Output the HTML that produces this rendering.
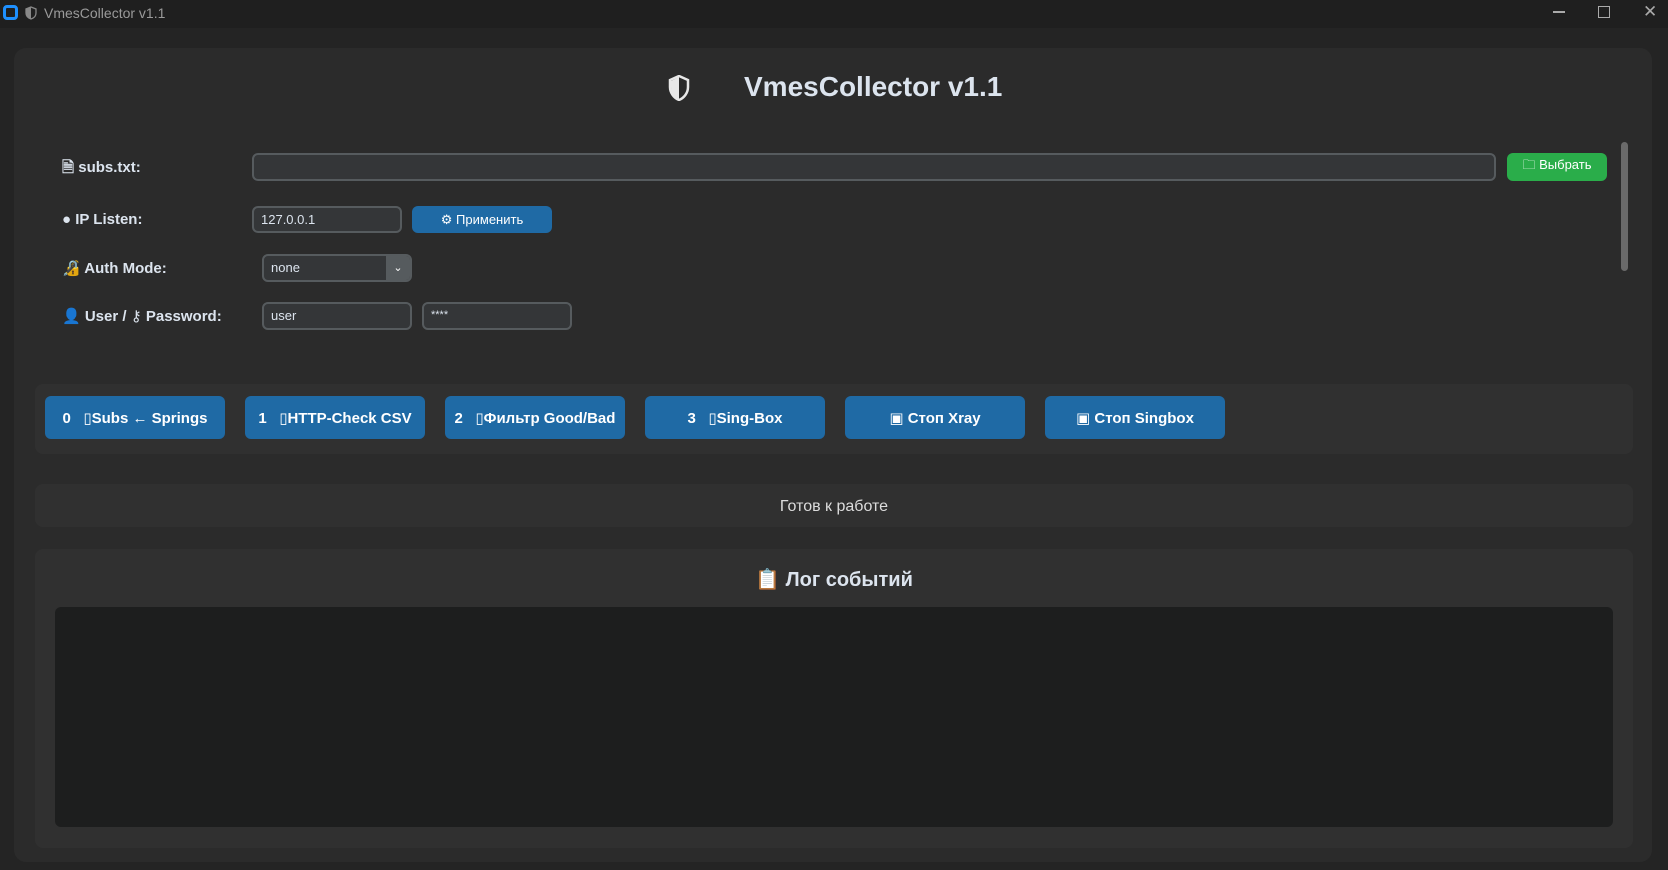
<!DOCTYPE html>
<html><head><meta charset="utf-8"><style>
*{box-sizing:border-box;margin:0;padding:0}
body{width:1668px;height:870px;background:#242424;font-family:"Liberation Sans","DejaVu Sans",sans-serif;color:#dce4ee;position:relative;overflow:hidden}
.a{position:absolute}
.tb{left:0;top:0;width:1668px;height:28px;background:#1f1f1f}
.frame{left:14px;top:48px;width:1638px;height:814px;background:#2b2b2b;border-radius:12px}
.lbl{font-weight:bold;font-size:15px;color:#dce4ee}
.inp{background:#343638;border:2px solid #565b5e;border-radius:6px;font-size:13px;color:#dce4ee;padding-left:7px;line-height:23px}
.btn{background:#1f6aa5;border-radius:6px;color:#fff;font-weight:bold;font-size:15px;display:flex;align-items:center;justify-content:center}
.panel{background:#303030;border-radius:8px;left:35px;width:1598px}
</style></head><body>
<div class="a tb"></div>
<div class="a" style="left:3px;top:5px;width:15px;height:15px;border:3px solid #1e90ff;border-radius:4px"></div>
<svg class="a" style="left:25px;top:6px" width="12" height="14" viewBox="0 0 12 14"><path d="M6 1 L11 3 V7 C11 10 9 12 6 13 C3 12 1 10 1 7 V3 Z" fill="none" stroke="#888" stroke-width="1.3"/><path d="M6 1 V13 C3 12 1 10 1 7 V3 Z" fill="#888"/></svg>
<div class="a" style="left:44px;top:5px;font-size:14px;color:#9a9a9a">VmesCollector v1.1</div>
<div class="a" style="left:1553px;top:11px;width:12px;height:1.5px;background:#aaa"></div>
<div class="a" style="left:1598px;top:6px;width:12px;height:12px;border:1.5px solid #aaa"></div>
<div class="a" style="left:1643px;top:2px;font-size:17px;color:#aaa">✕</div>
<div class="a frame"></div>
<svg class="a" style="left:668px;top:75px" width="22" height="26" viewBox="0 0 22 26"><path d="M11 1 L20 5 V12 C20 18 16 23 11 25 C6 23 2 18 2 12 V5 Z" fill="none" stroke="#e8e8e8" stroke-width="2.5"/><path d="M11 2 L11 24 C6 22 3 18 3 12 V6 Z" fill="#e8e8e8"/></svg>
<div class="a" style="left:744px;top:71px;font-size:28px;font-weight:bold;color:#dce4ee">VmesCollector v1.1</div>

<div class="a lbl" style="left:62px;top:157px">🗎 subs.txt:</div>
<div class="a inp" style="left:252px;top:153px;width:1244px;height:28px"></div>
<div class="a btn" style="left:1507px;top:153px;width:100px;height:28px;background:#2aad4a;font-weight:normal;font-size:13px">🗀 Выбрать</div>
<div class="a" style="left:1621px;top:142px;width:7px;height:129px;background:#6a6a6a;border-radius:4px"></div>

<div class="a lbl" style="left:62px;top:211px">● IP Listen:</div>
<div class="a inp" style="left:252px;top:206px;width:150px;height:27px">127.0.0.1</div>
<div class="a btn" style="left:412px;top:206px;width:140px;height:27px;font-weight:normal;font-size:13px">⚙ Применить</div>

<div class="a lbl" style="left:62px;top:259px">🔏 Auth Mode:</div>
<div class="a inp" style="left:262px;top:254px;width:150px;height:28px">none</div>
<div class="a" style="left:386px;top:256px;width:24px;height:24px;background:#565b5e;border-radius:0 4px 4px 0;color:#fff;font-size:11px;text-align:center;line-height:24px">⌄</div>

<div class="a lbl" style="left:62px;top:307px">👤 User / ⚷ Password:</div>
<div class="a inp" style="left:262px;top:302px;width:150px;height:28px">user</div>
<div class="a inp" style="left:422px;top:302px;width:150px;height:28px;font-size:11px">****</div>

<div class="a panel" style="top:384px;height:70px"></div>
<div class="a btn" style="left:45px;top:396px;width:180px;height:43px">0 &nbsp;&nbsp;▯Subs ← Springs</div>
<div class="a btn" style="left:245px;top:396px;width:180px;height:43px">1 &nbsp;&nbsp;▯HTTP-Check CSV</div>
<div class="a btn" style="left:445px;top:396px;width:180px;height:43px">2 &nbsp;&nbsp;▯Фильтр Good/Bad</div>
<div class="a btn" style="left:645px;top:396px;width:180px;height:43px">3 &nbsp;&nbsp;▯Sing-Box</div>
<div class="a btn" style="left:845px;top:396px;width:180px;height:43px">▣ Стоп Xray</div>
<div class="a btn" style="left:1045px;top:396px;width:180px;height:43px">▣ Стоп Singbox</div>

<div class="a panel" style="top:484px;height:43px;display:flex;align-items:center;justify-content:center;font-size:16px;color:#dcdcdc;padding-top:3px">Готов к работе</div>

<div class="a panel" style="top:549px;height:299px"></div>
<div class="a" style="left:0;width:1668px;top:567px;text-align:center;font-size:20px;font-weight:bold;color:#dce4ee">📋 Лог событий</div>
<div class="a" style="left:55px;top:607px;width:1558px;height:220px;background:#1d1e1e;border-radius:6px"></div>
</body></html>
